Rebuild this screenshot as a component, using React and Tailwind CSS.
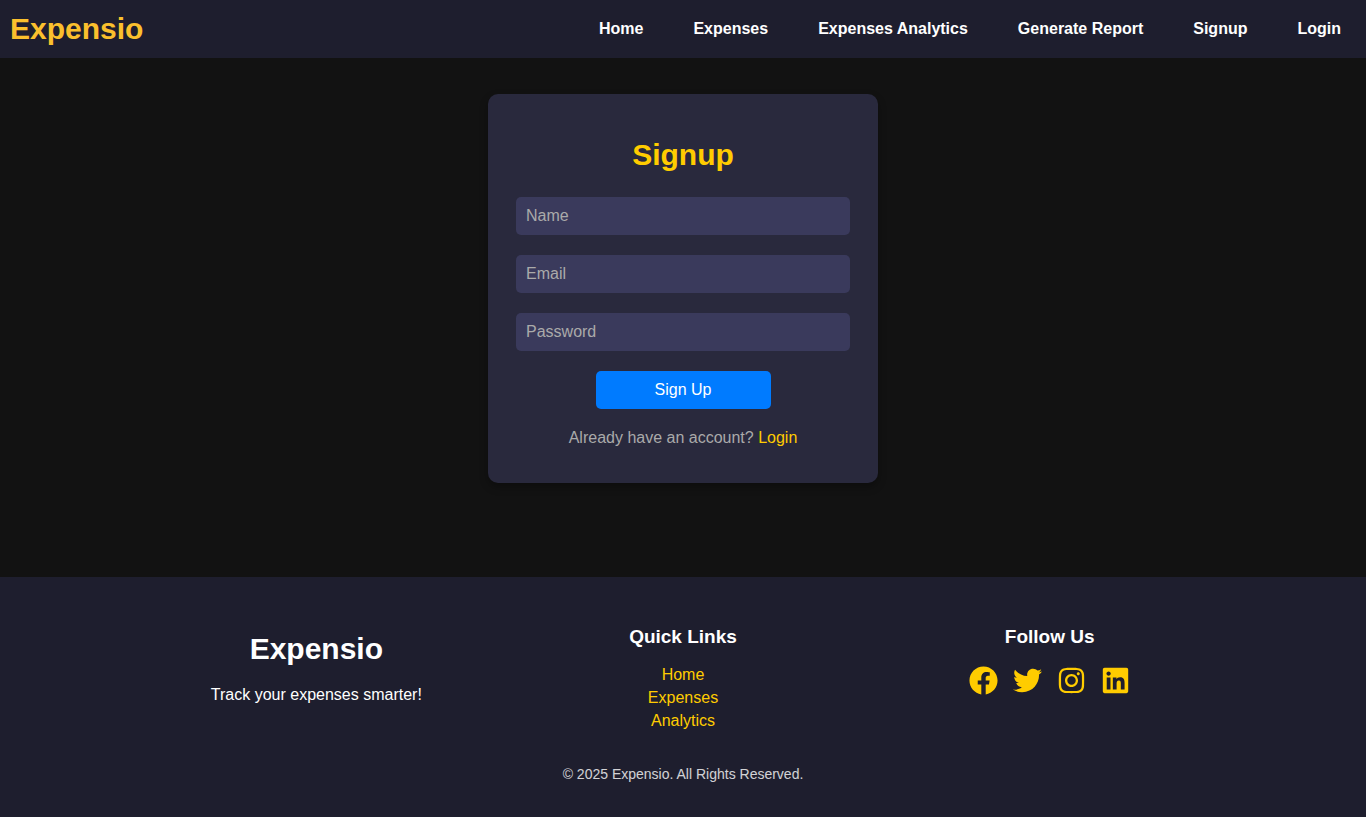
import React from "react";
import { FaFacebook, FaTwitter, FaInstagram, FaLinkedin } from "react-icons/fa";

const navLinks = ["Home", "Expenses", "Expenses Analytics", "Generate Report", "Signup", "Login"];

const fields = [
  { id: "name", label: "Name", type: "text" },
  { id: "email", label: "Email", type: "email" },
  { id: "password", label: "Password", type: "password" },
];

const socials = [
  { name: "Facebook", Icon: FaFacebook },
  { name: "Twitter", Icon: FaTwitter },
  { name: "Instagram", Icon: FaInstagram },
  { name: "LinkedIn", Icon: FaLinkedin },
];

function Header() {
  return (
    <header className="flex items-center justify-between bg-[#1e1e2e] py-[11px] pl-[10px]">
      <a href="#" className="text-3xl leading-9 font-bold text-[#fbc02d]">Expensio</a>
      <nav className="flex">
        {navLinks.map((label) => (
          <a key={label} href="#" className="px-[25px] font-bold text-white">{label}</a>
        ))}
      </nav>
    </header>
  );
}

function SignupCard() {
  return (
    <section className="w-full max-w-[390px] rounded-[10px] bg-[#29293d] px-7 pt-[43px] pb-[33px] text-center shadow-[0_4px_8px_rgba(0,0,0,0.3)]">
      <h1 className="mb-6 text-3xl leading-9 font-bold text-[#ffcc00]">Signup</h1>
      <form className="flex flex-col items-center gap-5" onSubmit={(e) => e.preventDefault()}>
        {fields.map(({ id, label, type }) => (
          <input
            key={id}
            id={id}
            name={id}
            type={type}
            aria-label={label}
            placeholder={label}
            className="block h-[38px] w-full rounded-[5px] bg-[#3a3a5c] px-[10px] text-base text-white outline-none placeholder:text-[#aaaaaa]"
          />
        ))}
        <button type="submit" className="h-[38px] w-[175px] rounded-[5px] bg-[#007bff] text-base text-white">
          Sign Up
        </button>
      </form>
      <p className="mt-[17px] text-[#aaaaaa]">
        Already have an account? <a href="#" className="text-[#ffcc00]">Login</a>
      </p>
    </section>
  );
}

function Footer() {
  return (
    <footer className="bg-[#1e1e2e] pt-12 pb-[33px] text-center text-white">
      <div className="mx-auto grid max-w-[1100px] grid-cols-3">
        <div className="pt-[6px]">
          <h2 className="mb-4 text-3xl leading-9 font-bold">Expensio</h2>
          <p className="leading-[23px]">Track your expenses smarter!</p>
        </div>
        <div>
          <h3 className="mb-[14px] text-[19px] leading-6 font-bold">Quick Links</h3>
          <ul className="leading-[23px] text-[#ffcc00]">
            <li><a href="#">Home</a></li>
            <li><a href="#">Expenses</a></li>
            <li><a href="#">Analytics</a></li>
          </ul>
        </div>
        <div>
          <h3 className="mb-[17px] text-[19px] leading-6 font-bold">Follow Us</h3>
          <div className="flex justify-center gap-[15px] text-[29px] text-[#ffcc00]">
            {socials.map(({ name, Icon }) => (
              <a key={name} href="#" aria-label={name}><Icon /></a>
            ))}
          </div>
        </div>
      </div>
      <p className="mt-8 text-sm leading-5 opacity-80">© 2025 Expensio. All Rights Reserved.</p>
    </footer>
  );
}

export default function App() {
  return (
    <div className="flex min-h-screen flex-col bg-[#121212] font-['Liberation_Sans',Arial,sans-serif] text-base">
      <Header />
      <main className="flex flex-1 items-start justify-center px-4 pt-9 pb-[94px]">
        <SignupCard />
      </main>
      <Footer />
    </div>
  );
}
